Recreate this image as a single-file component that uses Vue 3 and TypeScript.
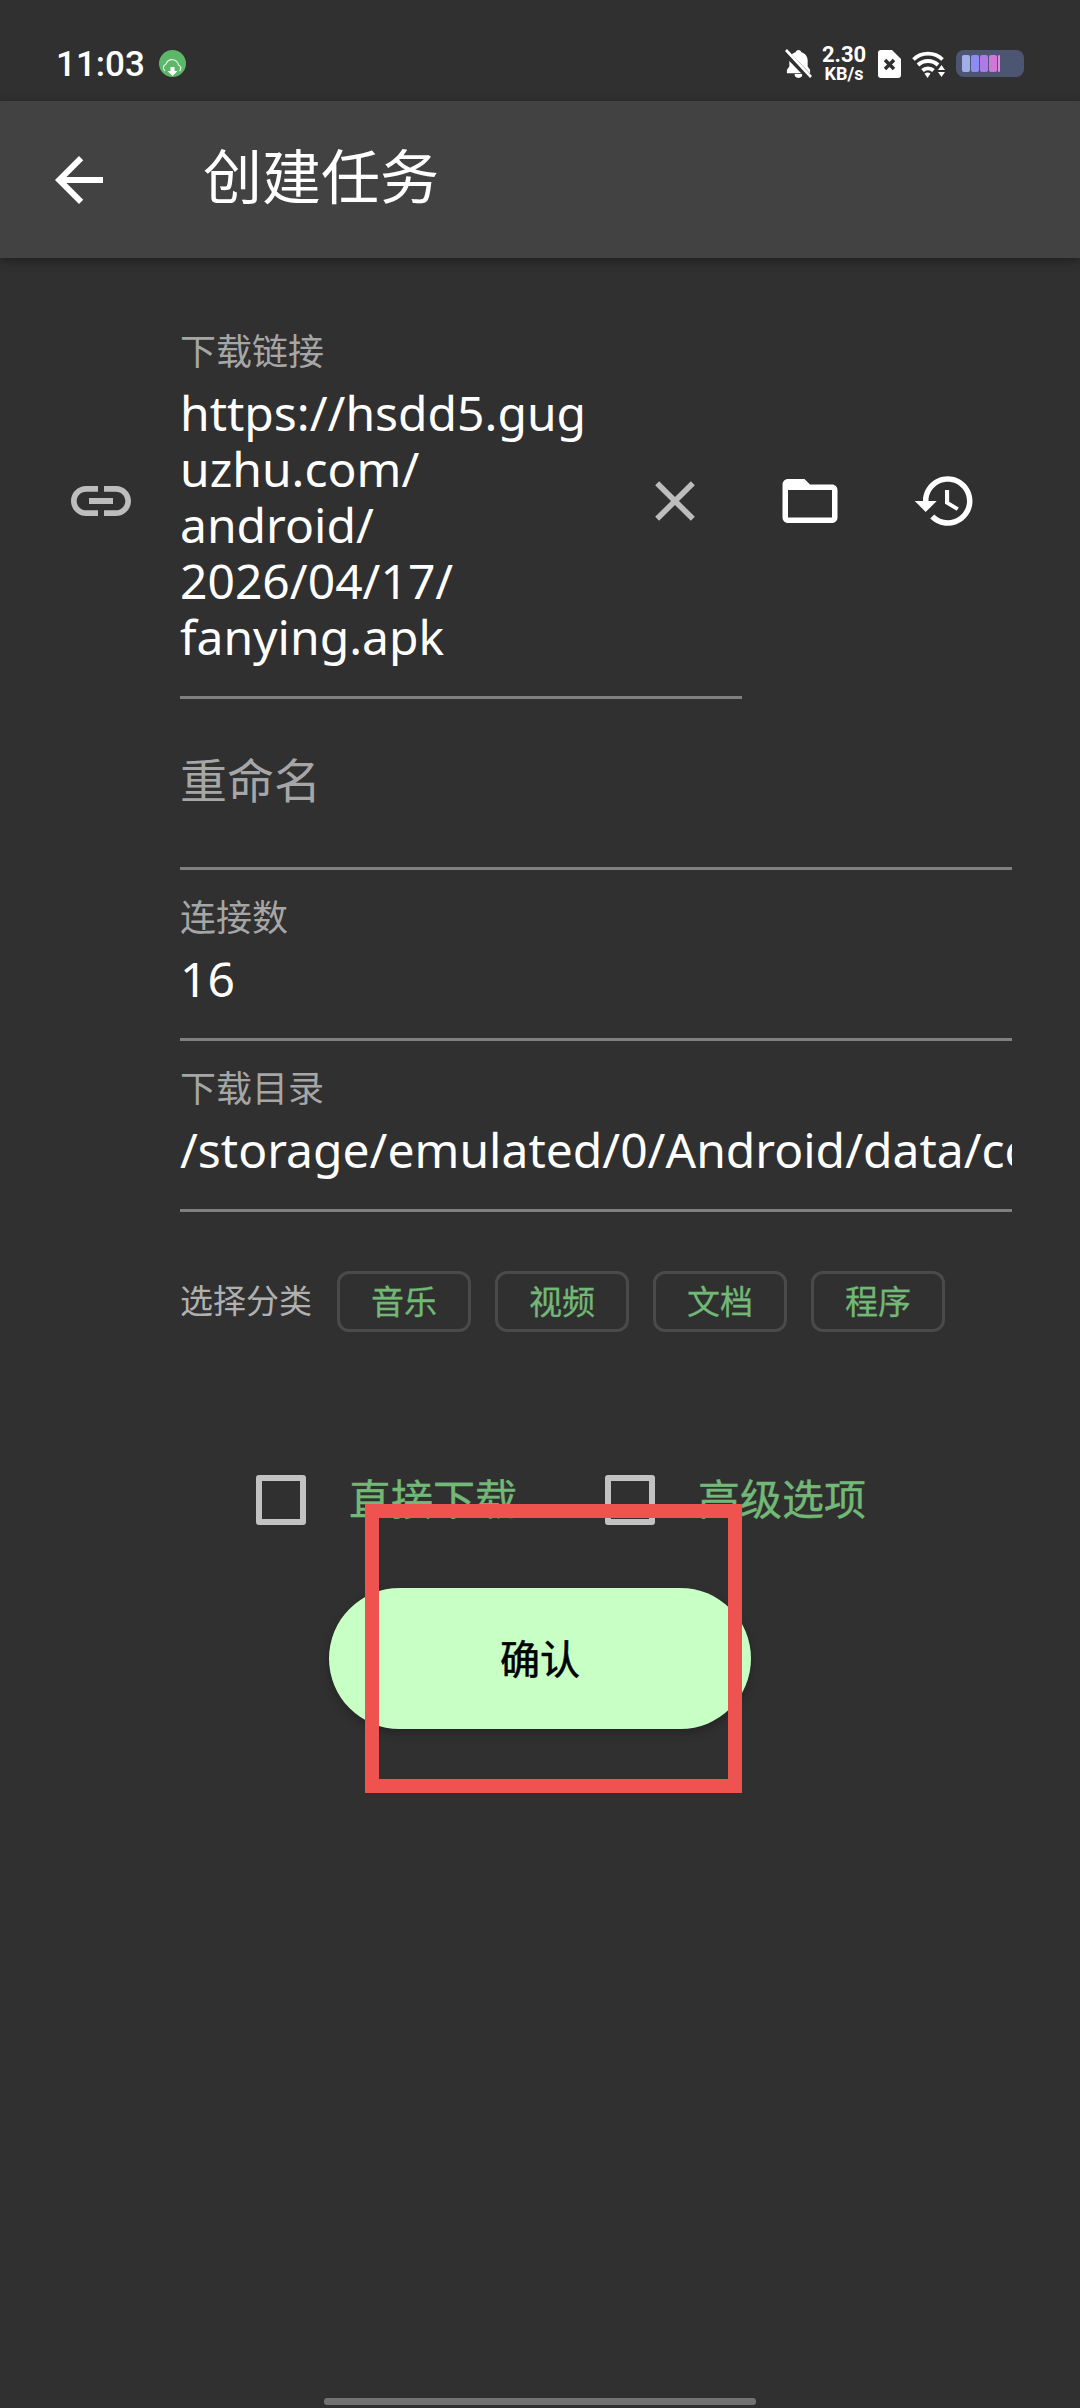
<script setup lang="ts">
interface Field {
  label: string
  value: string
}

const urlLines = ['https://hsdd5.gug', 'uzhu.com/', 'android/', '2026/04/17/', 'fanying.apk']

const fields: Field[] = [
  { label: '连接数', value: '16' },
  { label: '下载目录', value: '/storage/emulated/0/Android/data/com' },
]

const tags = ['音乐', '视频', '文档', '程序']
const checks = ['直接下载', '高级选项']
</script>

<template>
  <div class="page">
    <div class="status">
      <div class="status__left">
        <span class="status__time">11:03</span>
        <svg class="status__app" viewBox="0 0 27 27">
          <circle cx="13.5" cy="13.5" r="13.5" fill="#5cb868" />
          <path d="M6 21a4 4 0 0 1 1-7 6.500 6.500 0 0 1 12.500 1 3.500 3.500 0 0 1 1 6" fill="none" stroke="#e8f6ea" stroke-width="1.2" />
          <path d="M11.500 17h4v4h3L13.500 26l-5-5h3z" fill="#fff" />
        </svg>
      </div>
      <div class="status__right">
        <svg class="status__bell" viewBox="0 0 28 30">
          <path d="M14 1c-1.600 0-2.800 1-3 2.400C7 4.400 4.500 8 4.500 12v6L2 21.500V25h24v-3.500L23.500 18v-6c0-4-2.500-7.600-6.500-8.600C16.800 2 15.600 1 14 1z" fill="#fff" />
          <path d="M10 26h8a4 4 0 0 1-8 0z" fill="#fff" />
          <path d="M0 3l26 27" stroke="#303030" stroke-width="6.500" />
          <path d="M1 1l26 28" stroke="#fff" stroke-width="2.800" />
        </svg>
        <div class="status__speed">
          <span class="status__speed-num">2.30</span>
          <span class="status__speed-unit">KB/s</span>
        </div>
        <svg class="status__sim" viewBox="0 0 23 28">
          <path d="M3 0h11l9 9v16a3 3 0 0 1-3 3H3a3 3 0 0 1-3-3V3a3 3 0 0 1 3-3z" fill="#fff" />
          <path d="M7 10l9 9M16 10l-9 9" stroke="#303030" stroke-width="3.500" />
        </svg>
        <svg class="status__wifi" viewBox="0 0 34 28">
          <path d="M1.500 9.500a21 21 0 0 1 29 0M6 15a14.500 14.500 0 0 1 20 0M10.500 20.500a8 8 0 0 1 11 0" fill="none" stroke="#fff" stroke-width="3.800" />
          <path d="M12.500 23.500a5 5 0 0 1 6 0l-3 4.500z" fill="#fff" />
          <path d="M29.500 15l3.500 5h-7zM29.500 27l-3.500-5h7z" fill="#fff" />
        </svg>
        <div class="status__battery">
          <span class="status__cell" style="background: #a3aee8"></span>
          <span class="status__cell" style="background: #8f8cf0"></span>
          <span class="status__cell" style="background: #b07ae6"></span>
          <span class="status__cell" style="background: #cf78d8"></span>
          <span class="status__cell status__cell--thin" style="background: #e08ae0"></span>
        </div>
      </div>
    </div>

    <header class="bar">
      <svg class="bar__back" viewBox="0 0 24 24">
        <path d="M20 11H7.830l5.590-5.590L12 4l-8 8 8 8 1.410-1.410L7.830 13H20v-2z" fill="#fff" />
      </svg>
      <h1 class="bar__title">创建任务</h1>
    </header>

    <main class="form">
      <div class="row">
        <div class="row__icon">
          <svg class="icon" viewBox="0 0 24 24">
            <path d="M3.900 12c0-1.710 1.390-3.100 3.100-3.100h4V7H7c-2.760 0-5 2.240-5 5s2.240 5 5 5h4v-1.900H7c-1.710 0-3.100-1.390-3.100-3.100zM8 13h8v-2H8v2zm9-6h-4v1.900h4c1.710 0 3.100 1.390 3.100 3.100s-1.390 3.100-3.100 3.100h-4V17h4c2.760 0 5-2.240 5-5s-2.240-5-5-5z" fill="#bdbdbd" />
          </svg>
        </div>
        <div class="field field--url">
          <span class="field__label">下载链接</span>
          <div class="field__value">
            <div v-for="line in urlLines" :key="line">{{ line }}</div>
          </div>
        </div>
        <div class="row__actions">
          <svg class="icon icon--close" viewBox="0 0 24 24">
            <path d="M19 6.410 17.590 5 12 10.590 6.410 5 5 6.410 10.590 12 5 17.590 6.410 19 12 13.410 17.590 19 19 17.590 13.410 12z" fill="#bdbdbd" />
          </svg>
          <svg class="icon icon--folder" viewBox="0 0 24 24">
            <path d="M20 6h-8l-2-2H4c-1.100 0-1.990.9-1.990 2L2 18c0 1.100.9 2 2 2h16c1.100 0 2-.9 2-2V8c0-1.100-.9-2-2-2zm0 12H4V8h16v10z" fill="#fff" />
          </svg>
          <svg class="icon icon--history" viewBox="0 0 24 24">
            <path d="M13 3c-4.970 0-9 4.030-9 9H1l3.890 3.890.07.140L9 12H6c0-3.870 3.130-7 7-7s7 3.130 7 7-3.130 7-7 7c-1.930 0-3.680-.79-4.940-2.060l-1.420 1.420C8.270 19.990 10.510 21 13 21c4.970 0 9-4.030 9-9s-4.030-9-9-9zm-1 5v5l4.280 2.540.72-1.210-3.500-2.080V8H12z" fill="#fff" />
          </svg>
        </div>
      </div>

      <div class="field field--empty">
        <span class="field__placeholder">重命名</span>
      </div>

      <div v-for="f in fields" :key="f.label" class="field">
        <span class="field__label">{{ f.label }}</span>
        <div class="field__value field__value--clip">{{ f.value }}</div>
      </div>

      <div class="tags">
        <span class="tags__label">选择分类</span>
        <span v-for="t in tags" :key="t" class="tag">{{ t }}</span>
      </div>
    </main>

    <div class="checks">
      <label v-for="c in checks" :key="c" class="check">
        <span class="check__box"></span>
        <span class="check__text">{{ c }}</span>
      </label>
    </div>

    <div class="confirm">
      <button class="confirm__btn">确认</button>
    </div>

    <div class="mark"></div>
    <div class="home"></div>
  </div>
</template>

<style scoped>
.page {
  position: relative;
  width: 1080px;
  height: 2408px;
  overflow: hidden;
  background: #303030;
  font-family: "Noto Sans", "Noto Sans CJK SC", sans-serif;
  color: #fff;
}

.status {
  height: 101px;
  box-sizing: border-box;
  padding: 26px 56px 0 56px;
  display: flex;
  align-items: center;
  justify-content: space-between;
}

.status__left {
  display: flex;
  align-items: center;
  gap: 14px;
}

.status__time {
  font-family: Roboto, sans-serif;
  font-size: 35px;
  font-weight: 500;
  line-height: 42px;
  padding-top: 2px;
}

.status__app {
  width: 27px;
  height: 27px;
}

.status__right {
  display: flex;
  align-items: center;
}

.status__bell {
  width: 27px;
  height: 29px;
}

.status__speed {
  width: 44px;
  margin-left: 10px;
  display: flex;
  flex-direction: column;
  align-items: center;
  font-family: Roboto, sans-serif;
  font-weight: 700;
}

.status__speed-num {
  font-size: 22px;
  line-height: 20px;
}

.status__speed-unit {
  font-size: 18px;
  line-height: 17px;
}

.status__sim {
  width: 23px;
  height: 28px;
  margin-left: 12px;
}

.status__wifi {
  width: 34px;
  height: 28px;
  margin-left: 11px;
}

.status__battery {
  width: 68px;
  height: 27px;
  margin-left: 10px;
  box-sizing: border-box;
  padding: 5px 6px;
  border-radius: 8px;
  background: #4c5672;
  display: flex;
  gap: 1px;
}

.status__cell {
  width: 8px;
  border-radius: 2px;
}

.status__cell--thin {
  width: 2px;
}

.bar {
  height: 157px;
  background: #424242;
  box-shadow: 0 3px 10px rgba(0, 0, 0, 0.35);
  display: flex;
  align-items: center;
  position: relative;
}

.bar__back {
  width: 72px;
  height: 72px;
  margin-left: 43px;
}

.bar__title {
  margin: 0 0 7px 88px;
  font-size: 59px;
  font-weight: 400;
  line-height: 68px;
}

.form {
  padding-left: 180px;
  padding-right: 68px;
  display: flex;
  flex-direction: column;
}

.row {
  display: flex;
  align-items: center;
  margin-left: -180px;
  margin-top: 46px;
}

.row__icon {
  flex: none;
  width: 180px;
  padding-left: 65px;
  padding-bottom: 1px;
  box-sizing: border-box;
}

.row__actions {
  display: flex;
  align-items: center;
  margin-left: -101px;
  padding-bottom: 1px;
}

.icon {
  display: block;
  width: 72px;
  height: 72px;
  flex: none;
}

.icon--close {
  width: 68px;
  height: 68px;
  margin-right: 68px;
}

.icon--folder {
  width: 66px;
  height: 66px;
  margin-right: 69px;
}

.icon--history {
  width: 66px;
  height: 66px;
}

.field {
  box-sizing: border-box;
  border-bottom: 3px solid #808080;
  padding: 26px 0 31px;
  min-height: 171px;
}

.field--url {
  flex: none;
  width: 562px;
}

.field--empty {
  padding-top: 53px;
  padding-bottom: 0;
}

.field__label {
  display: block;
  font-size: 36px;
  line-height: 44px;
  color: #a6a6a6;
  margin-bottom: 11px;
}

.field__placeholder {
  display: block;
  font-size: 47px;
  line-height: 56px;
  color: #a6a6a6;
}

.field__value {
  font-size: 48px;
  line-height: 56px;
  color: #fff;
}

.field__value--clip {
  white-space: nowrap;
  overflow-x: clip;
}

.tags {
  margin-top: 59px;
  display: flex;
  align-items: center;
  gap: 24px;
}

.tags__label {
  font-size: 33px;
  line-height: 59px;
  color: #b0b0b0;
  padding-bottom: 2px;
  margin-right: 1px;
}

.tag {
  box-sizing: border-box;
  width: 134px;
  height: 61px;
  padding-bottom: 3px;
  border: 3px solid #4a4a4a;
  border-radius: 12px;
  display: flex;
  align-items: center;
  justify-content: center;
  font-size: 33px;
  color: #72b876;
  -webkit-text-stroke: 0.3px #72b876;
}

.checks {
  margin-top: 142px;
  padding-left: 256px;
  display: flex;
  gap: 88px;
}

.check {
  display: flex;
  align-items: center;
  gap: 43px;
}

.check__box {
  box-sizing: border-box;
  width: 50px;
  height: 50px;
  border: 6px solid #c2c2c2;
  border-radius: 3px;
}

.check__text {
  font-size: 42px;
  line-height: 50px;
  padding-bottom: 2px;
  color: #72b876;
  -webkit-text-stroke: 0.4px #72b876;
}

.confirm {
  margin-top: 62px;
  display: flex;
  justify-content: center;
}

.confirm__btn {
  width: 422px;
  height: 141px;
  border: 0;
  border-radius: 71px;
  background: #c8ffc4;
  box-shadow: 0 4px 10px rgba(0, 0, 0, 0.25);
  color: #000;
  font-family: inherit;
  font-size: 40px;
  font-weight: 400;
  -webkit-text-stroke: 0.6px #000;
  padding: 0 0 4px;
}

/* red annotation drawn over the screenshot */
.mark {
  position: absolute;
  left: 365px;
  top: 1504px;
  width: 377px;
  height: 289px;
  box-sizing: border-box;
  border: 14px solid #ef5350;
}

.home {
  position: absolute;
  left: 324px;
  top: 2398px;
  width: 432px;
  height: 7px;
  border-radius: 3px;
  background: #727272;
}
</style>
